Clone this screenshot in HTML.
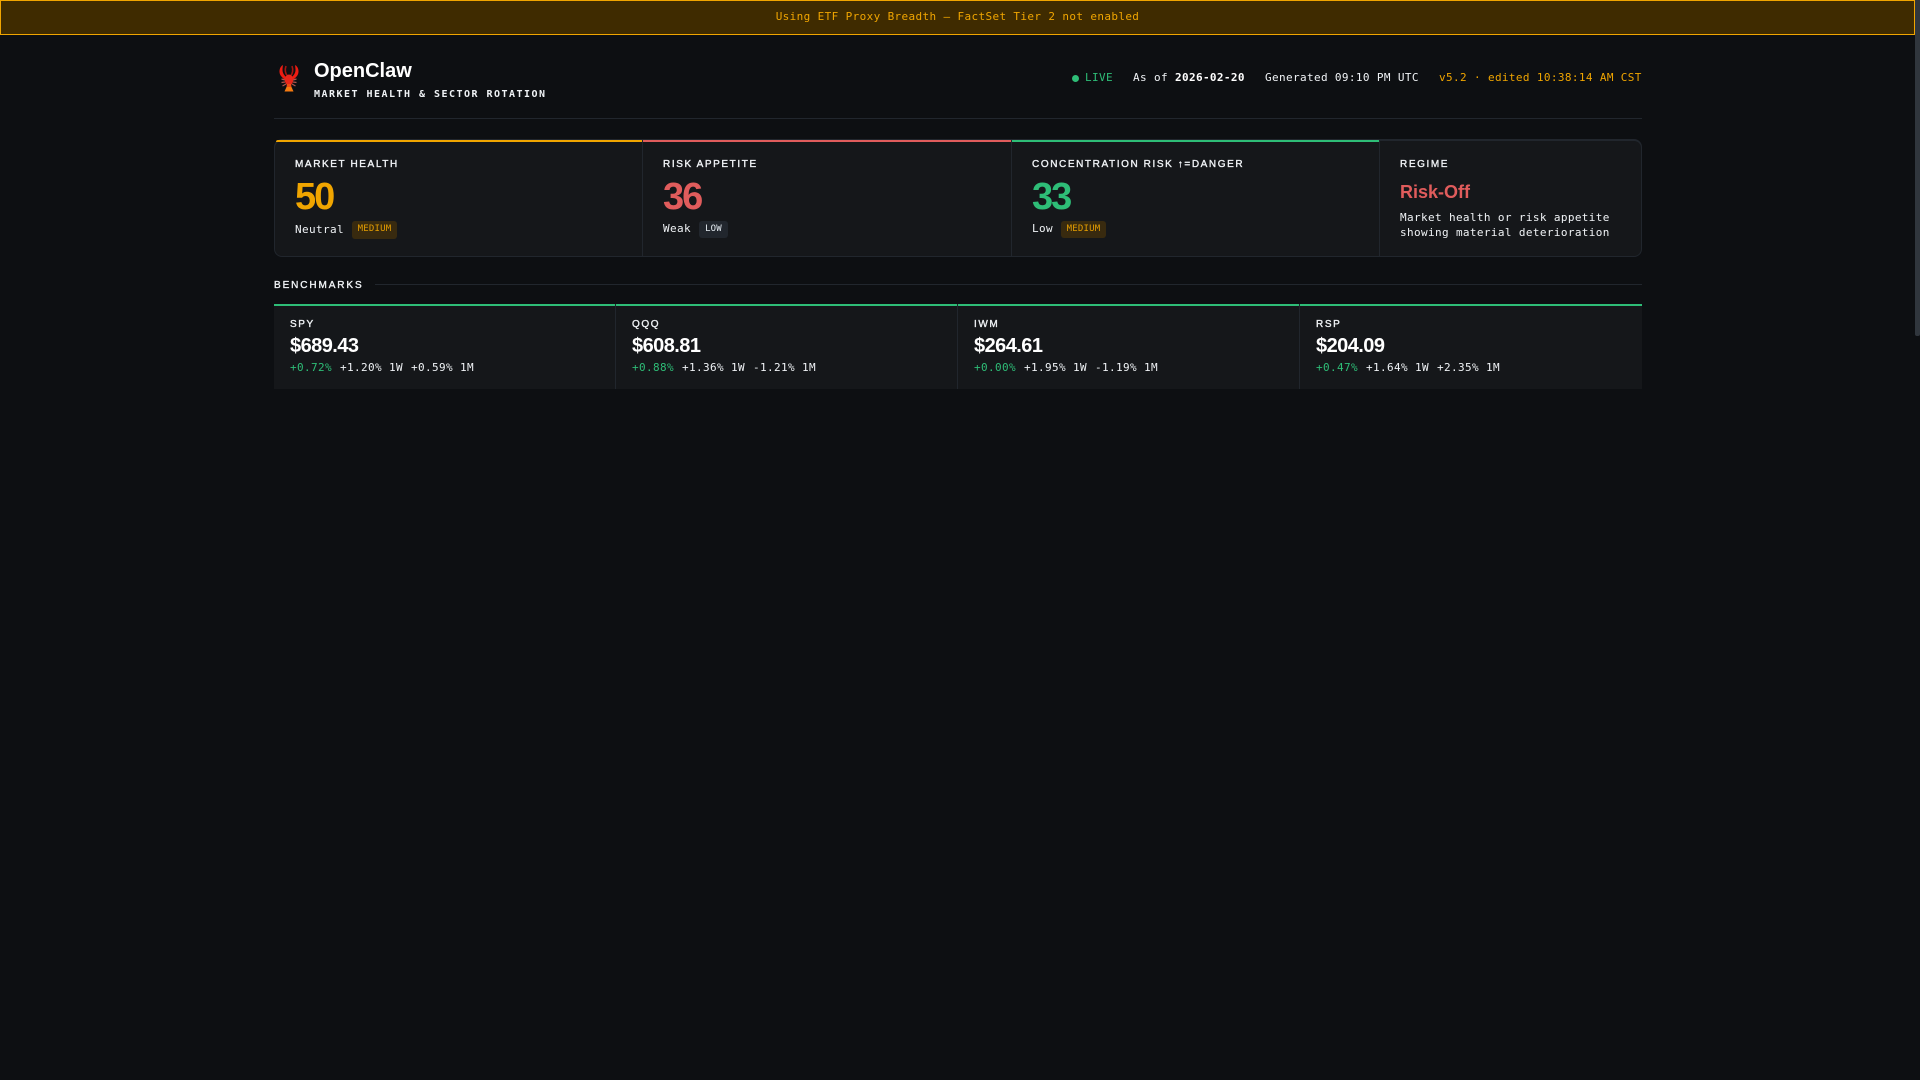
<!DOCTYPE html>
<html lang="en"><head><meta charset="utf-8"><title>OpenClaw</title>
<style>
html,body{margin:0;padding:0;width:1920px;height:1080px;overflow:hidden;background:#0d0f12;color:#e6edf3}
*{box-sizing:border-box}
.a{position:absolute;white-space:nowrap}
.m{font-family:"DejaVu Sans Mono","Liberation Mono",monospace;font-size:11px;letter-spacing:.37px;line-height:15px}
.s{font-family:"Liberation Sans",sans-serif}
.lbl{font-family:"Liberation Sans",sans-serif;font-size:10px;font-weight:400;-webkit-text-stroke:.35px #f0f3f6;letter-spacing:1.6px;line-height:12px;color:#f0f3f6}
.num{font-family:"Liberation Sans",sans-serif;font-size:38px;font-weight:700;letter-spacing:-2px;line-height:44px}
.badge{position:absolute;font-family:"DejaVu Sans Mono",monospace;font-size:9px;letter-spacing:.2px;text-align:center;border-radius:3px;line-height:17px}
.med{background:#3a2c0f;color:#f0a500;opacity:.95}
.low{background:#21262d;color:#e6edf3}
.card{position:absolute;top:141px;height:115px;background:#15171a}
.bar{position:absolute;top:140px;height:2px}
.bc{position:absolute;top:304px;height:85px;background:#15171a;border-top:2px solid #2ebd77}
.price{font-family:"Liberation Sans",sans-serif;font-size:20px;font-weight:700;letter-spacing:-.55px;line-height:24px;color:#fff}
.g{color:#2ebd77}.w{color:#f0f3f6}
</style></head><body>
<div class="a" style="left:0;top:0;width:1915px;height:35px;background:#3f2b00;border:1px solid #f0a500"></div>
<div class="a m" style="left:0;top:9px;width:1915px;text-align:center;color:#f0a500">Using ETF Proxy Breadth — FactSet Tier 2 not enabled</div>

<svg class="a" style="left:276px;top:62px" width="26" height="32" viewBox="0 0 26 32">
<g fill="#ee1c12">
<path d="M7 3C3 5 2.500 11 5 14C6.500 16 8.500 17.500 10 18L11 15.500C8.500 14 6.500 11 6.500 8C6.500 6 6.800 4.500 7 3Z"/>
<path d="M19 3C23 5 23.500 11 21 14C19.500 16 17.500 17.500 16 18L15 15.500C17.500 14 19.500 11 19.500 8C19.500 6 19.200 4.500 19 3Z"/>
</g>
<g fill="none" stroke="#a51610" stroke-width="1.600">
<path d="M10 4C8.500 8 9.500 12 11.500 14"/><path d="M16 4C17.500 8 16.500 12 14.500 14"/>
</g>
<g stroke="#b0564c" stroke-width="1.200" fill="none">
<path d="M9 18L5.500 17M9 20L5.500 20.500M10 22L6.500 24M17 18L20.500 17M17 20L20.500 20.500M16 22L19.500 24"/>
</g>
<ellipse cx="13" cy="18" rx="4.200" ry="5.500" fill="#e8261a"/>
<path d="M11 22h4l.5 3h-5z" fill="#f04a10"/>
<path d="M10.500 25h5l2 4.500h-9z" fill="#f57a10"/>
</svg>

<div class="a s" style="left:314px;top:59px;font-size:20px;font-weight:700;line-height:24px;color:#fff">OpenClaw</div>
<div class="a m" style="left:314px;top:87px;font-size:10px;font-weight:700;letter-spacing:1.48px;color:#f0f3f6">MARKET HEALTH &amp; SECTOR ROTATION</div>

<div class="a" style="left:1072px;top:75px;width:7px;height:7px;border-radius:50%;background:#2ebd77"></div>
<div class="a m g" style="left:1085px;top:70px">LIVE</div>
<div class="a m w" style="left:1133px;top:70px">As of <b style="color:#fff">2026-02-20</b></div>
<div class="a m w" style="left:1265px;top:70px">Generated 09:10 PM UTC</div>
<div class="a m" style="left:1439px;top:70px;color:#f0a500">v5.2 · edited 10:38:14 AM CST</div>
<div class="a" style="left:274px;top:118px;width:1368px;height:1px;background:#21262d"></div>

<div class="a" style="left:274px;top:139px;width:1368px;height:118px;background:#21262d;border-radius:8px;overflow:hidden">
</div>
<div class="card" style="left:275px;width:367px;border-radius:7px 0 0 7px"></div>
<div class="card" style="left:643px;width:368px"></div>
<div class="card" style="left:1012px;width:367px"></div>
<div class="card" style="left:1380px;width:261px;border-radius:0 7px 7px 0"></div>
<div class="bar" style="left:276px;width:366px;background:#f0a500;border-radius:3px 0 0 0"></div>
<div class="bar" style="left:643px;width:368px;background:#e05c5c"></div>
<div class="bar" style="left:1012px;width:367px;background:#2ebd77"></div>

<div class="a lbl" style="left:295px;top:157px;margin-top:2px">MARKET HEALTH</div>
<div class="a num" style="left:295px;top:175px;color:#f0a500">50</div>
<div class="a m w" style="left:295px;top:222px">Neutral</div>
<div class="badge med" style="left:352px;top:221px;width:45px;height:18px">MEDIUM</div>

<div class="a lbl" style="left:663px;top:157px;margin-top:2px">RISK APPETITE</div>
<div class="a num" style="left:663px;top:175px;color:#e05c5c">36</div>
<div class="a m w" style="left:663px;top:221px">Weak</div>
<div class="badge low" style="left:699px;top:221px;width:29px;height:17px">LOW</div>

<div class="a lbl" style="left:1032px;top:157px;margin-top:2px">CONCENTRATION RISK ↑=DANGER</div>
<div class="a num" style="left:1032px;top:175px;color:#2ebd77">33</div>
<div class="a m w" style="left:1032px;top:221px">Low</div>
<div class="badge med" style="left:1061px;top:221px;width:45px;height:17px">MEDIUM</div>

<div class="a lbl" style="left:1400px;top:157px;margin-top:2px">REGIME</div>
<div class="a s" style="left:1400px;top:181px;font-size:18px;font-weight:700;line-height:22px;color:#e05c5c">Risk-Off</div>
<div class="a m w" style="left:1400px;top:210px">Market health or risk appetite<br>showing material deterioration</div>

<div class="a lbl" style="left:274px;top:278px;margin-top:2px;letter-spacing:1.9px">BENCHMARKS</div>
<div class="a" style="left:375px;top:284px;width:1267px;height:1px;background:#21262d"></div>

<div class="a" style="left:274px;top:304px;width:1368px;height:85px;background:#21262d"></div>
<div class="bc" style="left:274px;width:341px"></div>
<div class="bc" style="left:616px;width:341px"></div>
<div class="bc" style="left:958px;width:341px"></div>
<div class="bc" style="left:1300px;width:342px"></div>

<div class="a lbl" style="left:290px;top:319px">SPY</div>
<div class="a price" style="left:290px;top:334px">$689.43</div>
<div class="a m g" style="left:290px;top:360px">+0.72%</div>
<div class="a m w" style="left:340px;top:360px">+1.20% 1W</div>
<div class="a m w" style="left:411px;top:360px">+0.59% 1M</div>

<div class="a lbl" style="left:632px;top:319px">QQQ</div>
<div class="a price" style="left:632px;top:334px">$608.81</div>
<div class="a m g" style="left:632px;top:360px">+0.88%</div>
<div class="a m w" style="left:682px;top:360px">+1.36% 1W</div>
<div class="a m w" style="left:753px;top:360px">-1.21% 1M</div>

<div class="a lbl" style="left:974px;top:319px">IWM</div>
<div class="a price" style="left:974px;top:334px">$264.61</div>
<div class="a m g" style="left:974px;top:360px">+0.00%</div>
<div class="a m w" style="left:1024px;top:360px">+1.95% 1W</div>
<div class="a m w" style="left:1095px;top:360px">-1.19% 1M</div>

<div class="a lbl" style="left:1316px;top:319px">RSP</div>
<div class="a price" style="left:1316px;top:334px">$204.09</div>
<div class="a m g" style="left:1316px;top:360px">+0.47%</div>
<div class="a m w" style="left:1366px;top:360px">+1.64% 1W</div>
<div class="a m w" style="left:1437px;top:360px">+2.35% 1M</div>

<div class="a" style="left:1915px;top:0;width:5px;height:1080px;background:#0d0f12"></div>
<div class="a" style="left:1915px;top:0;width:5px;height:336px;background:#30363d;border-radius:0 0 2px 2px"></div>
</body></html>
